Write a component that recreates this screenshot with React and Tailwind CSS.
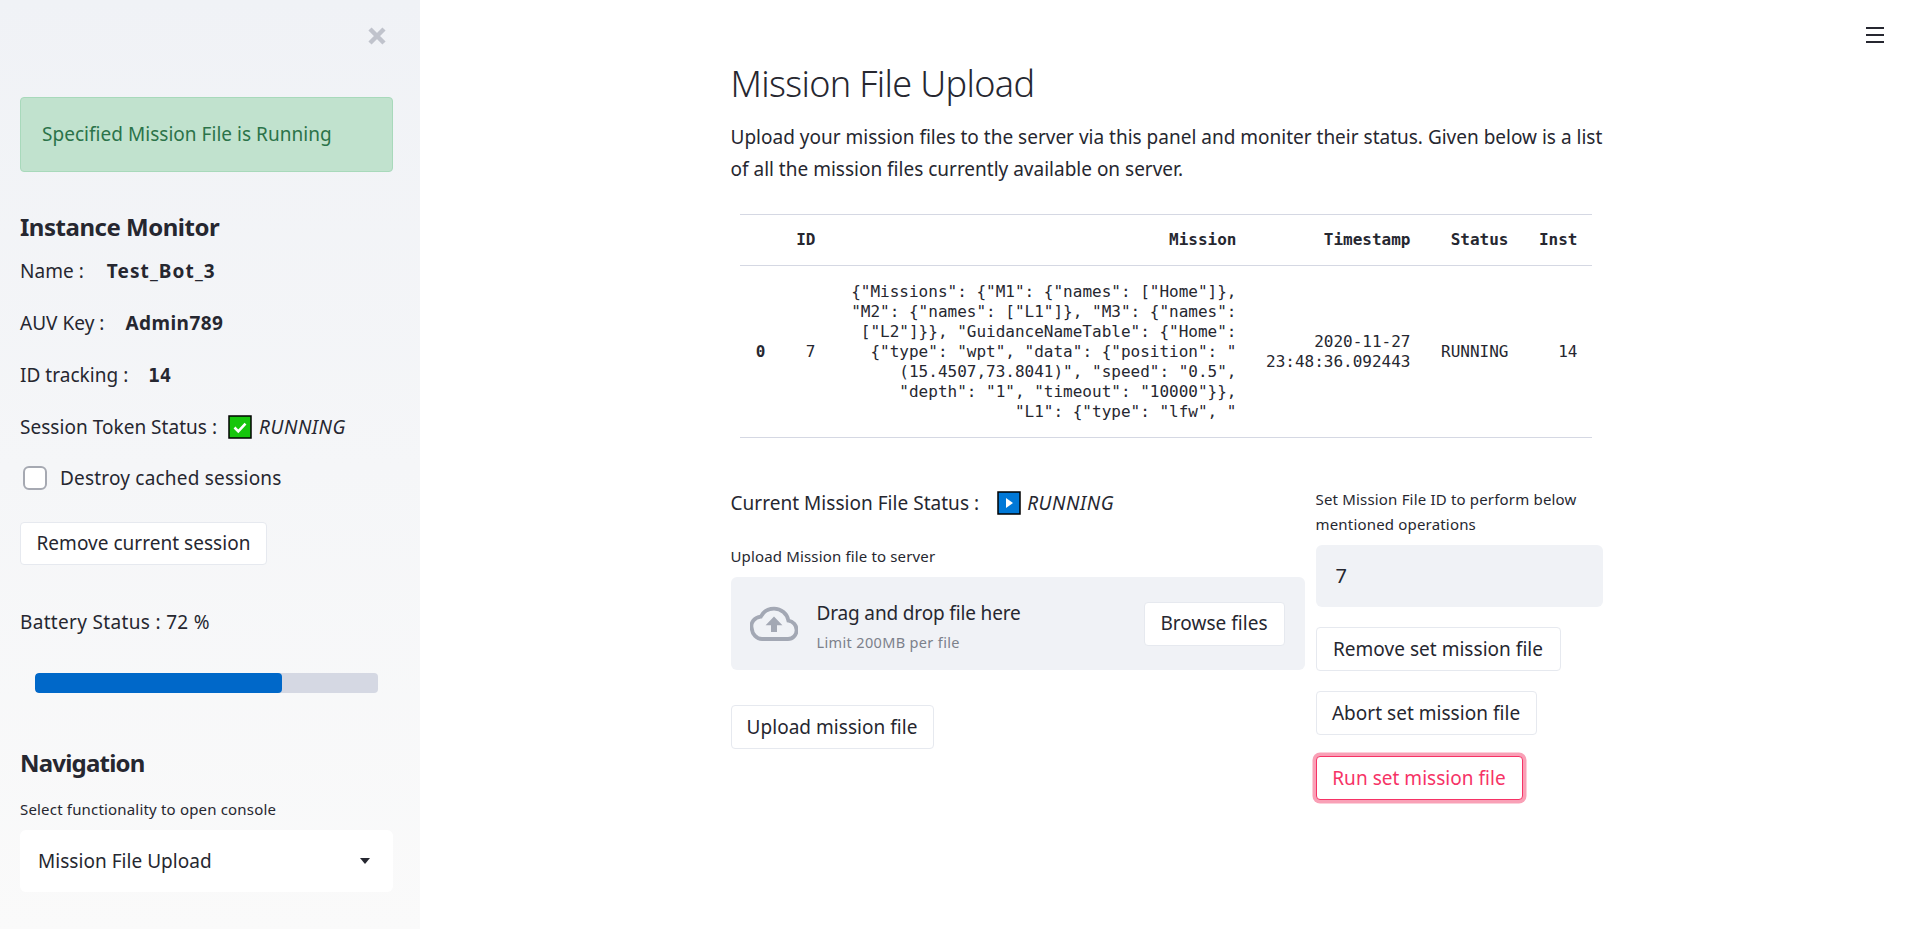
import React from 'react';

const sans = "font-['Noto_Sans',sans-serif]";
const mono = "font-['DejaVu_Sans_Mono',monospace]";

const missionLines = [
  '{"Missions": {"M1": {"names": ["Home"]},',
  '"M2": {"names": ["L1"]}, "M3": {"names":',
  '["L2"]}}, "GuidanceNameTable": {"Home":',
  '{"type": "wpt", "data": {"position": "',
  '(15.4507,73.8041)", "speed": "0.5",',
  '"depth": "1", "timeout": "10000"}},',
  '"L1": {"type": "lfw", "',
];

const Btn = ({ children, className = '' }) => (
  <button className={`h-[44px] bg-white border border-[#e6e9ef] rounded text-[19px] text-[#262730] tracking-[0.03px] ${className}`}>
    {children}
  </button>
);

const CheckEmoji = () => (
  <svg width="24" height="24" viewBox="0 0 24 24" className="block shrink-0">
    <rect x="1" y="1" width="22" height="22" fill="#16c60c" stroke="#000" strokeWidth="1.5" />
    <path d="M6.5 12.5l3.8 3.8 7.2-7.6" fill="none" stroke="#fff" strokeWidth="2.6" />
  </svg>
);

const PlayEmoji = () => (
  <svg width="24" height="24" viewBox="0 0 24 24" className="block shrink-0">
    <rect x="1" y="1" width="22" height="22" fill="#0078d7" stroke="#000" strokeWidth="1.5" />
    <path d="M9 7l7 5-7 5z" fill="#fff" />
  </svg>
);

const Sidebar = () => (
  <aside className="w-[420px] shrink-0 h-full bg-linear-to-b from-[#f0f2f6] to-[#fafafa] pl-5 pr-[27px] flex flex-col text-[#262730]">
    <div className="flex justify-end h-[97px] pt-[27px] pr-[7px]">
      <svg width="18" height="18" viewBox="0 0 18 18">
        <path d="M2 2l14 14M16 2L2 16" stroke="#c0c3cc" strokeWidth="4.5" />
      </svg>
    </div>
    <div className="h-[75px] flex items-center px-[21px] bg-[#c1e2ce] border border-[#a8d9bb] rounded text-[#2b7349] text-[19px] tracking-[0.03px]">
      Specified Mission File is Running
    </div>
    <h2 className="mt-[38px] h-[34px] leading-[34px] text-[24px] font-bold tracking-[-0.48px]">Instance Monitor</h2>
    <div className="mt-[11px] text-[19px] leading-[32px] flex flex-col gap-[20px] tracking-[0.03px]">
      <div>Name : <b className="ml-[18px] font-bold tracking-[1.1px]">Test_Bot_3</b></div>
      <div>AUV Key : <b className="ml-[16px] font-bold tracking-[0.45px]">Admin789</b></div>
      <div>ID tracking : <b className={`ml-[15px] font-bold ${mono}`}>14</b></div>
      <div className="flex items-center h-[32px]">Session Token Status :<span className="ml-[11px]"><CheckEmoji /></span><i className="ml-[7px] tracking-[0.55px]">RUNNING</i></div>
    </div>
    <label className="mt-[19px] flex items-center text-[19px] h-[32px] tracking-[0.2px]">
      <span className="ml-[3px] w-[24px] h-[24px] rounded-md bg-white border-2 border-[#a6a9b2]" />
      <span className="ml-[13px]">Destroy cached sessions</span>
    </label>
    <Btn className="mt-[28px] !h-[43px] self-start w-[247px]">Remove current session</Btn>
    <div className="mt-[41px] text-[19px] leading-[32px] tracking-[0.33px]">Battery Status : 72 %</div>
    <div className="mt-[35px] mx-[15px] h-[20px] rounded-sm bg-[#d5d8e3] overflow-hidden">
      <div className="h-full w-[72%] bg-[#0068c9] rounded-sm" />
    </div>
    <h2 className="mt-[53px] h-[34px] leading-[34px] text-[24px] font-bold tracking-[-0.8px]">Navigation</h2>
    <div className="mt-[18px] h-[22px] leading-[22px] text-[15px] tracking-[0.18px]">Select functionality to open console</div>
    <div className="mt-[10px] h-[62px] rounded-md bg-white flex items-center justify-between pl-[18px] pr-[23px] text-[19px] tracking-[0.03px]">
      Mission File Upload
      <svg width="10" height="6" viewBox="0 0 10 6"><path d="M0 0h10L5 6z" fill="#262730" /></svg>
    </div>
  </aside>
);

const th = 'font-bold text-right pr-[14px] align-middle';
const td = 'text-right pr-[14px] align-middle';

const MissionTable = () => (
  <table className={`ml-[9px] mt-[29px] w-[852px] table-fixed border-collapse text-[16px] leading-[20px] text-[#262730] ${mono}`}>
    <colgroup>
      <col className="w-[40px]" />
      <col className="w-[50px]" />
      <col className="w-[421px]" />
      <col className="w-[174px]" />
      <col className="w-[98px]" />
      <col className="w-[69px]" />
    </colgroup>
    <thead>
      <tr className="h-[51px] border-y border-[#d5d8e3]">
        <th className={th}></th>
        <th className={th}>ID</th>
        <th className={th}>Mission</th>
        <th className={th}>Timestamp</th>
        <th className={th}>Status</th>
        <th className={th}>Inst</th>
      </tr>
    </thead>
    <tbody>
      <tr className="h-[172px] border-b border-[#d5d8e3]">
        <td className={`${td} font-bold`}>0</td>
        <td className={td}>7</td>
        <td className={td}>
          {missionLines.map((line) => <div key={line} className="whitespace-pre">{line}</div>)}
        </td>
        <td className={td}>2020-11-27<br />23:48:36.092443</td>
        <td className={td}>RUNNING</td>
        <td className={td}>14</td>
      </tr>
    </tbody>
  </table>
);

const CloudIcon = () => (
  <svg width="48" height="36" viewBox="0 0 24 18" fill="none">
    <path d="M19.2 7.3C18.6 3.9 15.6 1.3 12 1.3 9.1 1.3 6.6 2.9 5.4 5.3 2.4 5.6 0 8.2 0.9 11.3c.2 2.8 2.4 5.2 5.1 5.2h13c2.4 0 4.3-2 4.3-4.4 0-2.4-1.8-4.6-4.1-4.8z" stroke="#a3a8b4" strokeWidth="1.9" />
    <path d="M12 5.2l4.2 4.4h-2.7v3.4h-3v-3.4H7.8z" fill="#a3a8b4" />
  </svg>
);

const Main = () => (
  <main className="flex-1 h-full relative">
    <button className="absolute top-[27px] right-[29px] w-[18px] flex flex-col gap-[5px]">
      <span className="h-[2px] bg-[#262730]" />
      <span className="h-[2px] bg-[#262730]" />
      <span className="h-[2px] bg-[#262730]" />
    </button>
    <div className="w-[872px] mx-auto text-[#262730]">
      <h1 className="mt-[61px] h-[46px] leading-[46px] text-[36px] font-light tracking-[-0.65px]">Mission File Upload</h1>
      <p className="mt-[14px] text-[19px] leading-[32px] whitespace-nowrap">
        Upload your mission files to the server via this panel and moniter their status. Given below is a list<br />
        of all the mission files currently available on server.
      </p>
      <MissionTable />
      <div className="mt-[49px] flex gap-[11px]">
        <div className="w-[574px]">
          <div className="flex items-center h-[32px] text-[19px] tracking-[0.03px]">
            Current Mission File Status :<span className="ml-[18px]"><PlayEmoji /></span><i className="ml-[6px] tracking-[0.55px]">RUNNING</i>
          </div>
          <div className="mt-[26px] h-[22px] leading-[22px] text-[15px] tracking-[0.15px]">Upload Mission file to server</div>
          <div className="mt-[10px] h-[93px] bg-[#f0f2f6] rounded-md flex items-center pl-[19px] pr-[20px]">
            <CloudIcon />
            <div className="ml-[19px] flex-1 pt-[3px]">
              <div className="text-[19px] leading-[28px] tracking-[-0.15px]">Drag and drop file here</div>
              <div className="mt-[5px] text-[14.5px] leading-[20px] tracking-[0.35px] text-[#7c818b]">Limit 200MB per file</div>
            </div>
            <Btn className="w-[141px]">Browse files</Btn>
          </div>
          <Btn className="mt-[35px] w-[203px]">Upload mission file</Btn>
        </div>
        <div className="w-[287px] flex flex-col items-start">
          <div className="text-[15px] leading-[25px] tracking-[0.18px]">Set Mission File ID to perform below<br />mentioned operations</div>
          <div className="mt-[8px] w-full h-[62px] bg-[#f0f2f6] rounded-md flex items-center pl-[20px] text-[20px]">7</div>
          <Btn className="mt-[20px] w-[245px]">Remove set mission file</Btn>
          <Btn className="mt-[20px] w-[221px]">Abort set mission file</Btn>
          <Btn className="mt-[21px] w-[207px] !border-[#f63366] !text-[#f63366] ring-[3.5px] ring-[#f9a0b6]">Run set mission file</Btn>
        </div>
      </div>
    </div>
  </main>
);

export default function App() {
  return (
    <div className={`flex h-screen w-full overflow-hidden bg-white ${sans}`}>
      <Sidebar />
      <Main />
    </div>
  );
}
